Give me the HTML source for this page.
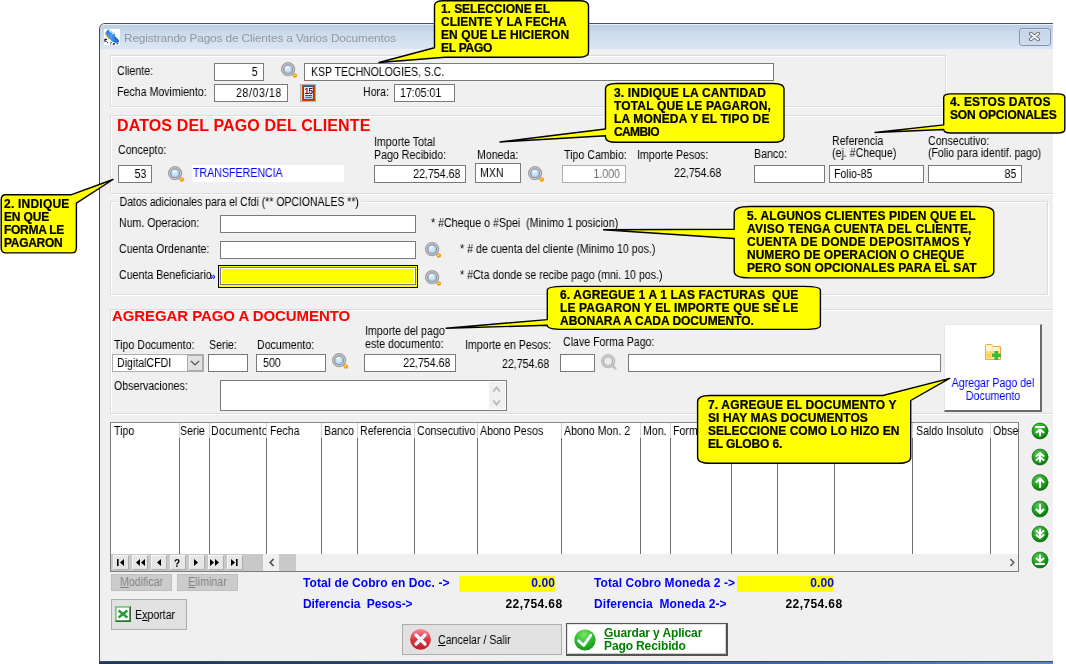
<!DOCTYPE html>
<html>
<head>
<meta charset="utf-8">
<title>Registrando Pagos de Clientes a Varios Documentos</title>
<style>
html,body{margin:0;padding:0;}
body{width:1066px;height:664px;position:relative;overflow:hidden;background:#fff;font-family:"Liberation Sans",sans-serif;font-size:12px;color:#000;}
.a{position:absolute;box-sizing:border-box;white-space:nowrap;}
.t,.in i,.gh,.bb,.ct,.hd{will-change:transform;}
.t{position:absolute;white-space:nowrap;line-height:14px;font-size:12px;transform:scaleX(.885);transform-origin:0 0;}
.tc{transform-origin:50% 0;}
.in i{font-style:normal;display:inline-block;transform:scaleX(.885);transform-origin:0 50%;}
.in.r i{transform-origin:100% 50%;}
.in{position:absolute;box-sizing:border-box;background:#fff;border:1px solid #7a7a7a;font-size:12px;line-height:16px;padding:0 5px;white-space:nowrap;overflow:hidden;}
.r{text-align:right;}
.gb{position:absolute;box-sizing:border-box;border:1px solid #dcdcdc;box-shadow:1px 1px 0 #fff, inset 1px 1px 0 #fff;}
.hd{position:absolute;white-space:nowrap;font-weight:bold;color:#ff0000;}
.bb{position:absolute;white-space:nowrap;font-weight:bold;color:#0000ff;font-size:12px;line-height:14px;letter-spacing:0.07px;}
.ct{position:absolute;white-space:pre;font-weight:bold;font-size:12px;line-height:13px;letter-spacing:0.17px;color:#000;-webkit-text-stroke:0.22px #000;}
.vl{position:absolute;width:1px;background:#6e6e6e;top:438px;height:116px;}
.gh{position:absolute;top:424px;white-space:nowrap;font-size:12px;line-height:14px;transform:scaleX(.885);transform-origin:0 0;}
.nb{position:absolute;top:555px;width:16px;height:15px;box-sizing:border-box;background:#e6e6e6;border:1px solid #f6f6f6;border-right-color:#adadad;border-bottom-color:#adadad;}
</style>
</head>
<body>

<!-- window frame -->
<div class="a" id="win" style="left:99px;top:23px;width:953.5px;height:639px;background:#f0f0f0;border-left:1px solid #484848;border-top:1px solid #505050;border-bottom:1px solid #484848;border-top-left-radius:6px;"></div>
<div class="a" style="left:100px;top:660px;width:952.5px;height:1px;background:#e6eef8;"></div>
<div class="a" id="titlebar" style="left:100px;top:24px;width:952.5px;height:25px;background:linear-gradient(#bccee3 0%,#cddbec 35%,#dae6f3 100%);border-top-left-radius:5px;border-top:1px solid #eaf1fa;"></div>
<div class="a" style="left:100px;top:49px;width:2px;height:611px;background:linear-gradient(90deg,#f4f8fc,#d6e4f3);"></div>
<div class="a" id="botstrip" style="left:99px;top:662px;width:953.5px;height:2px;background:linear-gradient(90deg,#1e3658,#26406a 25%,#2c5596 50%,#3a68b0 75%,#5888cc);"></div>

<!-- title icon -->
<svg class="a" style="left:104px;top:29px" width="16" height="16" viewBox="0 0 16 16">
<defs><linearGradient id="sh" x1="0" y1="0" x2="1" y2="0.3"><stop offset="0" stop-color="#1f74d8"/><stop offset="0.5" stop-color="#4a9ef0"/><stop offset="1" stop-color="#1f70d0"/></linearGradient></defs>
<rect width="16" height="16" fill="#fff"/>
<path d="M1 3.3 L2.4 2.8 L2.4 5.4 L6.2 10 L5 10.6 L1.2 6Z" fill="#f0a818"/>
<path d="M4.6 0 L5.2 1.4 L10.6 4 L11 7 L15 11.4 L14.8 13.4 L12 14 L8 12.5 L5 9 L2.2 5 L2.2 2.4Z" fill="url(#sh)"/>
<path d="M5.4 1.4 L10.4 3.8 L9.6 5 L5 2.6Z" fill="#c4d2e6"/>
<path d="M8.2 3.8 L10.2 4 L10 5 L8.4 4.8Z" fill="#fff"/>
<path d="M10.4 8 Q11.5 10.8 13.8 10.6" fill="none" stroke="#1558b0" stroke-width="1"/>
<path d="M3 10.4 H0.9 V12.2 H2.6" fill="none" stroke="#111" stroke-width="1.1"/>
<rect x="3" y="13.2" width="1" height="1" fill="#111"/><rect x="6.6" y="13" width="1" height="1" fill="#111"/><rect x="6.2" y="14.4" width="1" height="1" fill="#111"/>
<path d="M8.4 15.6 L9.4 14 L11 14.2 L10.8 15.8Z" fill="#111"/><rect x="12.4" y="14.3" width="1.8" height="0.9" fill="#222"/>
</svg>
<div class="t" style="left:124.3px;top:31px;font-size:11.8px;color:#94979d;letter-spacing:-0.12px;transform:none;">Registrando Pagos de Clientes a Varios Documentos</div>

<!-- close button -->
<div class="a" style="left:1019px;top:28px;width:32px;height:18px;border:1px solid #8492b0;border-radius:3px;background:linear-gradient(#c6d5e8,#cedbeb);box-shadow:inset 0 0 0 1px #d4e0ef;"></div>
<svg class="a" style="left:1028px;top:31px" width="13" height="11" viewBox="0 0 13 11"><path d="M2.8 2.6 L10.2 8.4 M10.2 2.6 L2.8 8.4" stroke="#4a505c" stroke-width="3.6" stroke-linecap="round"/><path d="M2.8 2.6 L10.2 8.4 M10.2 2.6 L2.8 8.4" stroke="#f6f6f6" stroke-width="2" stroke-linecap="round"/></svg>

<!-- group 1 -->
<div class="gb" style="left:110px;top:55px;width:836px;height:52px;"></div>
<div class="t" style="left:116.5px;top:64.2px;">Cliente:</div>
<div class="t" style="left:116.5px;top:85px;">Fecha Movimiento:</div>
<div class="in r" style="left:214px;top:63px;width:50px;height:18px;"><i>5</i></div>
<div class="in r" style="left:214px;top:84px;width:74px;height:18px;"><i style="letter-spacing:0.65px">28/03/18</i></div>
<div class="in" style="left:304px;top:63px;width:470px;height:18px;padding-left:6.2px;"><i style="transform:scaleX(.875)">KSP TECHNOLOGIES, S.C.</i></div>
<div class="t" style="left:363px;top:85.2px;">Hora:</div>
<div class="in" style="left:394px;top:84px;width:61px;height:18px;padding-left:5px;"><i>17:05:01</i></div>

<!-- group 2 -->
<div class="gb" style="left:110px;top:115px;width:942.5px;height:79px;border-right:none;"></div>
<div class="hd" style="left:117px;top:117px;font-size:16px;line-height:18px;letter-spacing:0.13px;">DATOS DEL PAGO DEL CLIENTE</div>
<div class="t" style="left:118px;top:143px;">Concepto:</div>
<div class="in r" style="left:118px;top:165px;width:34px;height:18px;"><i>53</i></div>
<div class="a" style="left:192px;top:165px;width:152px;height:17px;background:#fff;"></div>
<div class="t" style="left:193px;top:166px;color:#0000ff;">TRANSFERENCIA</div>
<div class="t" style="left:374px;top:135px;">Importe Total</div>
<div class="t" style="left:374px;top:148px;">Pago Recibido:</div>
<div class="in r" style="left:374px;top:165px;width:92px;height:18px;"><i>22,754.68</i></div>
<div class="t" style="left:477px;top:148px;">Moneda:</div>
<div class="in" style="left:475px;top:163px;width:46px;height:20px;padding-left:4px;line-height:18px;"><i>MXN</i></div>
<div class="t" style="left:564px;top:148px;">Tipo Cambio:</div>
<div class="in r" style="left:562px;top:165px;width:64px;height:18px;border-color:#adadad;color:#6d6d6d;"><i>1.000</i></div>
<div class="t" style="left:637px;top:148px;">Importe Pesos:</div>
<div class="t" style="left:674px;top:166px;">22,754.68</div>
<div class="t" style="left:754px;top:147.2px;">Banco:</div>
<div class="in" style="left:754px;top:165px;width:71px;height:18px;"></div>
<div class="t" style="left:832px;top:134.2px;">Referencia</div>
<div class="t" style="left:832px;top:146px;">(ej. #Cheque)</div>
<div class="in" style="left:829px;top:165px;width:95px;height:18px;padding-left:4px;"><i>Folio-85</i></div>
<div class="t" style="left:928px;top:134.2px;">Consecutivo:</div>
<div class="t" style="left:928px;top:146px;transform:scaleX(.87);">(Folio para identif. pago)</div>
<div class="in r" style="left:928px;top:165px;width:94px;height:18px;"><i>85</i></div>

<!-- group 3 -->
<div class="gb" style="left:110px;top:201px;width:938px;height:94px;"></div>
<div class="t" style="left:116.5px;top:194.5px;background:#f0f0f0;padding:0 3px;transform:scaleX(.873);">Datos adicionales para el Cfdi (** OPCIONALES **)</div>
<div class="t" style="left:119px;top:216px;">Num. Operacion:</div>
<div class="t" style="left:119px;top:242px;">Cuenta Ordenante:</div>
<div class="t" style="left:119px;top:268px;">Cuenta Beneficiario</div>
<div class="t" style="left:210px;top:270.2px;color:#1010e0;font-size:10px;font-weight:bold;transform:none;">&raquo;</div>
<div class="in" style="left:220px;top:215px;width:196px;height:18px;"></div>
<div class="in" style="left:220px;top:241px;width:196px;height:18px;"></div>
<div class="a" style="left:218px;top:265px;width:200px;height:23px;background:#ffff00;border:1px solid #000;"></div>
<div class="a" style="left:220px;top:267px;width:196px;height:18px;background:#ffff00;border:1px solid #7a7a7a;box-shadow:inset 1px 1px 0 #fff,inset -1px -1px 0 #fff;"></div>
<div class="t" style="left:431px;top:216px;">* #Cheque o #Spei&nbsp; (Minimo 1 posicion)</div>
<div class="t" style="left:460px;top:242px;">* # de cuenta del cliente (Minimo 10 pos.)</div>
<div class="t" style="left:460px;top:268px;">* #Cta donde se recibe pago (mni. 10 pos.)</div>

<!-- group 4 -->
<div class="gb" style="left:110px;top:309px;width:942.5px;height:105px;border-right:none;"></div>
<div class="hd" style="left:112px;top:306.7px;font-size:15px;line-height:17px;letter-spacing:-0.08px;">AGREGAR PAGO A DOCUMENTO</div>
<div class="t" style="left:114px;top:338px;">Tipo Documento:</div>
<div class="t" style="left:209px;top:338px;">Serie:</div>
<div class="t" style="left:257px;top:338px;">Documento:</div>
<div class="in" style="left:112px;top:354px;width:92px;height:18px;padding-left:4px;border-color:#adadad;"><i>DigitalCFDI</i></div>
<div class="a" style="left:187px;top:355px;width:16px;height:16px;background:#e1e1e1;border:1px solid #adadad;"></div>
<svg class="a" style="left:190px;top:360px" width="10" height="7" viewBox="0 0 10 7"><path d="M1 1 L5 5 L9 1" fill="none" stroke="#555" stroke-width="1.2"/></svg>
<div class="in" style="left:208px;top:354px;width:40px;height:18px;"></div>
<div class="in" style="left:256px;top:354px;width:70px;height:18px;padding-left:6px;"><i>500</i></div>
<div class="t" style="left:365px;top:324px;">Importe del pago</div>
<div class="t" style="left:365px;top:337px;">este documento:</div>
<div class="in r" style="left:364px;top:354px;width:92px;height:18px;"><i>22,754.68</i></div>
<div class="t" style="left:465px;top:338px;">Importe en Pesos:</div>
<div class="t" style="left:502px;top:357px;">22,754.68</div>
<div class="t" style="left:563px;top:335px;">Clave Forma Pago:</div>
<div class="in" style="left:560px;top:354px;width:34.5px;height:18px;"></div>
<div class="in" style="left:628px;top:354px;width:313px;height:18px;"></div>
<div class="t" style="left:114px;top:379px;">Observaciones:</div>
<div class="in" style="left:220px;top:380px;width:287px;height:31px;"></div>
<div class="a" style="left:489px;top:382px;width:16px;height:27px;background:#f0f0f0;"></div>
<svg class="a" style="left:492px;top:385px" width="11" height="22" viewBox="0 0 11 22"><path d="M1.2 6.6 L4.6 2.3 L8 6.6" fill="none" stroke="#bcbcbc" stroke-width="1.9"/><path d="M1.2 15.3 L4.6 19.7 L8 15.3" fill="none" stroke="#bcbcbc" stroke-width="1.9"/></svg>

<!-- agregar pago button -->
<div class="a" style="left:944px;top:324px;width:98px;height:88px;background:#fff;border:1px solid #e8e8e8;border-right:2px solid #6a6a6a;border-bottom:2px solid #6a6a6a;"></div>
<svg class="a" style="left:985px;top:344px" width="17" height="17" viewBox="0 0 17 17">
<path d="M0.5 2 Q0.5 0.5 2 0.5 H6.5 L8 2.5 H15.5 V15.5 H0.5 Z" fill="#fdf3c4" stroke="#f2a646" stroke-width="1"/>
<path d="M1 8.2 H7.5 L8.5 7 H15 V15 H1Z" fill="#fde88c"/>
<rect x="1.6" y="9.5" width="4.5" height="4.5" fill="#fdd24a"/>
<path d="M0.5 8 H7.5 L8.5 6.8" fill="none" stroke="#f2b060" stroke-width="0.8"/>
<path d="M11.3 6.9 V16 M6.9 11.3 H16" stroke="#3cba3c" stroke-width="3.6"/>
</svg>
<div class="t tc" style="left:938px;top:377.2px;width:110px;text-align:center;color:#0000ff;line-height:13px;white-space:normal;">Agregar Pago del Documento</div>

<!-- grid -->
<div class="a" style="left:110px;top:422px;width:909px;height:150px;background:#fff;border:1px solid #7a7a7a;border-top-color:#8a8a8a;"></div>
<div class="gh" style="left:114px;">Tipo</div>
<div class="gh" style="left:180.3px;">Serie</div>
<div class="gh" style="left:210.5px;width:62.5px;overflow:hidden;letter-spacing:0.35px;">Documento</div>
<div class="gh" style="left:270px;">Fecha</div>
<div class="gh" style="left:324px;">Banco</div>
<div class="gh" style="left:360px;">Referencia</div>
<div class="gh" style="left:417px;width:67px;overflow:hidden;">Consecutivo</div>
<div class="gh" style="left:480px;">Abono Pesos</div>
<div class="gh" style="left:564px;">Abono Mon. 2</div>
<div class="gh" style="left:643px;">Mon.</div>
<div class="gh" style="left:673px;">Form</div>
<div class="gh" style="left:916px;">Saldo Insoluto</div>
<div class="gh" style="left:993px;width:29px;overflow:hidden;">Obse</div>
<div class="a" style="left:179px;top:423px;width:1px;height:15px;background:#d4d4d4;"></div><div class="a" style="left:209px;top:423px;width:1px;height:15px;background:#d4d4d4;"></div><div class="a" style="left:266px;top:423px;width:1px;height:15px;background:#d4d4d4;"></div><div class="a" style="left:321px;top:423px;width:1px;height:15px;background:#d4d4d4;"></div><div class="a" style="left:357px;top:423px;width:1px;height:15px;background:#d4d4d4;"></div><div class="a" style="left:414px;top:423px;width:1px;height:15px;background:#d4d4d4;"></div><div class="a" style="left:477px;top:423px;width:1px;height:15px;background:#d4d4d4;"></div><div class="a" style="left:561px;top:423px;width:1px;height:15px;background:#d4d4d4;"></div><div class="a" style="left:640px;top:423px;width:1px;height:15px;background:#d4d4d4;"></div><div class="a" style="left:670px;top:423px;width:1px;height:15px;background:#d4d4d4;"></div><div class="a" style="left:731px;top:423px;width:1px;height:15px;background:#d4d4d4;"></div><div class="a" style="left:777px;top:423px;width:1px;height:15px;background:#d4d4d4;"></div><div class="a" style="left:834px;top:423px;width:1px;height:15px;background:#d4d4d4;"></div><div class="a" style="left:912px;top:423px;width:1px;height:15px;background:#d4d4d4;"></div><div class="a" style="left:990px;top:423px;width:1px;height:15px;background:#d4d4d4;"></div>
<div class="vl" style="left:179px"></div>
<div class="vl" style="left:209px"></div>
<div class="vl" style="left:266px"></div>
<div class="vl" style="left:321px"></div>
<div class="vl" style="left:357px"></div>
<div class="vl" style="left:414px"></div>
<div class="vl" style="left:477px"></div>
<div class="vl" style="left:561px"></div>
<div class="vl" style="left:640px"></div>
<div class="vl" style="left:670px"></div>
<div class="vl" style="left:731px"></div>
<div class="vl" style="left:777px"></div>
<div class="vl" style="left:834px"></div>
<div class="vl" style="left:912px"></div>
<div class="vl" style="left:990px"></div>
<!-- nav row -->
<div class="a" style="left:111px;top:554px;width:907px;height:17px;background:#f0f0f0;"></div>
<div class="a" style="left:111px;top:554px;width:152px;height:17px;background:#c8c8c8;"></div>
<div class="nb" style="left:113px"></div>
<div class="nb" style="left:132px"></div>
<div class="nb" style="left:151px"></div>
<div class="nb" style="left:170px"></div>
<div class="nb" style="left:189px"></div>
<div class="nb" style="left:208px"></div>
<div class="nb" style="left:227px"></div>
<svg class="a" style="left:112px;top:554.8px;will-change:transform" width="132" height="14" viewBox="0 0 132 14" fill="#000">
<rect x="5" y="4" width="1.6" height="7"/><path d="M12 4 L12 11 L8 7.5Z"/>
<path d="M28 4 L28 11 L24 7.5Z"/><path d="M33 4 L33 11 L29 7.5Z"/>
<path d="M49 4 L49 11 L45 7.5Z"/>
<text x="62" y="11.5" font-family="Liberation Sans" font-weight="bold" font-size="10">?</text>
<path d="M82 4 L82 11 L86 7.5Z"/>
<path d="M98 4 L98 11 L102 7.5Z"/><path d="M103 4 L103 11 L107 7.5Z"/>
<path d="M119 4 L119 11 L123 7.5Z"/><rect x="124" y="4" width="1.6" height="7"/>
</svg>
<svg class="a" style="left:267px;top:557px" width="10" height="11" viewBox="0 0 10 11"><path d="M6.6 2 L3.2 5.5 L6.6 9" fill="none" stroke="#505050" stroke-width="1.7"/></svg>
<div class="a" style="left:279px;top:554px;width:17px;height:17px;background:#c9c9c9;"></div>
<svg class="a" style="left:1007px;top:557px" width="10" height="11" viewBox="0 0 10 11"><path d="M3.4 2 L6.8 5.5 L3.4 9" fill="none" stroke="#606060" stroke-width="1.6"/></svg>

<!-- lower buttons -->
<div class="a" style="left:111px;top:574px;width:61px;height:17px;background:#cccccc;border:1px solid #bfbfbf;"></div>
<div class="t tc" style="left:111px;top:575px;width:61px;text-align:center;color:#838383;"><u>M</u>odificar</div>
<div class="a" style="left:177px;top:574px;width:61px;height:17px;background:#cccccc;border:1px solid #bfbfbf;"></div>
<div class="t tc" style="left:177px;top:575px;width:61px;text-align:center;color:#838383;"><u>E</u>liminar</div>
<div class="a" style="left:111px;top:599px;width:76px;height:31px;background:#e1e1e1;border:1px solid #adadad;"></div>
<svg class="a" style="left:115px;top:606px" width="16" height="16" viewBox="0 0 16 16">
<rect width="16" height="16" fill="#86c486"/>
<path d="M16 0 V16 H0 L1.8 14.2 H14.2 V1.8Z" fill="#2c6c2c"/>
<rect x="1.8" y="1.8" width="12.4" height="12.4" fill="#fff"/>
<path d="M3.6 4.6 L12.4 11.4 M12.4 4.6 L3.6 11.4" stroke="#2a9a3a" stroke-width="2.5"/>
</svg>
<div class="t" style="left:135px;top:608px;">E<u>x</u>portar</div>

<!-- totals -->
<div class="bb" style="left:303px;top:576px;">Total de Cobro en Doc. -&gt;</div>
<div class="a" style="left:459px;top:576px;width:96px;height:16px;background:#ffff00;"></div>
<div class="bb" style="left:459px;top:576px;width:96px;text-align:right;">0.00</div>
<div class="bb" style="left:303px;top:597px;letter-spacing:-0.08px;">Diferencia&nbsp; Pesos-&gt;</div>
<div class="bb" style="left:459px;top:597px;width:103.5px;text-align:right;color:#000;letter-spacing:0.4px;">22,754.68</div>
<div class="bb" style="left:594px;top:576px;">Total Cobro Moneda 2 -&gt;</div>
<div class="a" style="left:737px;top:576px;width:97px;height:16px;background:#ffff00;"></div>
<div class="bb" style="left:737px;top:576px;width:97px;text-align:right;">0.00</div>
<div class="bb" style="left:594px;top:597px;">Diferencia&nbsp; Moneda 2-&gt;</div>
<div class="bb" style="left:739px;top:597px;width:103.5px;text-align:right;color:#000;letter-spacing:0.4px;">22,754.68</div>

<!-- cancel / save buttons -->
<div class="a" style="left:402px;top:624px;width:160px;height:31px;background:#e1e1e1;border:1px solid #adadad;"></div>
<svg class="a" style="left:408.5px;top:628px" width="23" height="23" viewBox="0 0 23 23">
<defs><linearGradient id="rg" x1="0" y1="0" x2="0" y2="1"><stop offset="0" stop-color="#f48a92"/><stop offset="0.5" stop-color="#dc3840"/><stop offset="1" stop-color="#c01c26"/></linearGradient></defs>
<circle cx="11.5" cy="11.4" r="10.4" fill="url(#rg)"/>
<path d="M7 7 L16 16 M16 7 L7 16" stroke="#f2f8ff" stroke-width="3.3" stroke-linecap="round"/>
</svg>
<div class="t" style="left:438px;top:633px;"><u>C</u>ancelar / Salir</div>

<div class="a" style="left:566px;top:623px;width:162px;height:33px;background:#fff;border:1px solid #555;border-right:2px solid #555;border-bottom:2px solid #555;box-shadow:inset 1px 1px 0 #e4e4e4,inset -1px -1px 0 #d0d0d0;"></div>
<svg class="a" style="left:573px;top:627.5px" width="24" height="24" viewBox="0 0 24 24">
<defs><radialGradient id="gg" cx="0.45" cy="0.25" r="0.75"><stop offset="0" stop-color="#7ae868"/><stop offset="0.6" stop-color="#2cb82c"/><stop offset="1" stop-color="#189618"/></radialGradient></defs>
<circle cx="12" cy="12" r="10.6" fill="url(#gg)"/>
<path d="M5.6 12.8 L10.8 17.4 L17.8 7.2" fill="none" stroke="#f4f8ff" stroke-width="2.9" stroke-linecap="round" stroke-linejoin="round"/>
</svg>
<div class="bb" style="left:604px;top:626px;color:#008000;line-height:13px;letter-spacing:-0.12px;top:627px;"><u>G</u>uardar y Aplicar<br>Pago Recibido</div>

<!-- green side arrows -->
<svg class="a" style="left:1030px;top:422px" width="20" height="150" viewBox="0 0 20 150">
<defs><radialGradient id="ga" cx="0.4" cy="0.3" r="0.8"><stop offset="0" stop-color="#58c858"/><stop offset="0.65" stop-color="#169616"/><stop offset="1" stop-color="#0a620a"/></radialGradient></defs>
<g stroke="#fff" stroke-width="2.1" fill="none" stroke-linecap="round" stroke-linejoin="round">
<circle cx="10" cy="9" r="8" fill="url(#ga)" stroke="#0a5a0a" stroke-width="0.6"/>
<path d="M6 5 H14 M10 13.5 V8 M6.5 10.5 L10 7.5 L13.5 10.5"/>
<circle cx="10" cy="35" r="8" fill="url(#ga)" stroke="#0a5a0a" stroke-width="0.6"/>
<path d="M6.5 34 L10 31 L13.5 34 M6.5 38 L10 35 L13.5 38 M10 39.5 V32"/>
<circle cx="10" cy="60.5" r="8" fill="url(#ga)" stroke="#0a5a0a" stroke-width="0.6"/>
<path d="M10 65 V57 M6.5 60 L10 56.5 L13.5 60"/>
<circle cx="10" cy="87" r="8" fill="url(#ga)" stroke="#0a5a0a" stroke-width="0.6"/>
<path d="M10 82.5 V90.5 M6.5 87.5 L10 91 L13.5 87.5"/>
<circle cx="10" cy="112" r="8" fill="url(#ga)" stroke="#0a5a0a" stroke-width="0.6"/>
<path d="M6.5 109 L10 112 L13.5 109 M6.5 113 L10 116 L13.5 113 M10 107.5 V115"/>
<circle cx="10" cy="138" r="8" fill="url(#ga)" stroke="#0a5a0a" stroke-width="0.6"/>
<path d="M6 142 H14 M10 133.5 V139 M6.5 136.5 L10 139.5 L13.5 136.5"/>
</g>
</svg>

<!-- magnifier icons -->
<svg width="0" height="0" style="position:absolute">
<defs>
<radialGradient id="mg" cx="0.4" cy="0.35" r="0.7"><stop offset="0" stop-color="#e4f4fd"/><stop offset="1" stop-color="#a4d4f2"/></radialGradient>
<g id="mag">
<path d="M11 11.2 L13.4 13.4" stroke="#a4a4a8" stroke-width="2.4"/>
<circle cx="7.1" cy="7.2" r="6.5" fill="#d2d2d8" stroke="#a0a0a8" stroke-width="1.3"/>
<circle cx="7.1" cy="7.2" r="4.4" fill="url(#mg)" stroke="#92929c" stroke-width="1.3"/>
<path d="M4.6 6.2 Q5.4 4.4 7.4 4.2" fill="none" stroke="#ffffff" stroke-width="0.9" opacity="0.8"/>
<circle cx="13.8" cy="13.5" r="2.3" fill="#f59c1a"/>
<circle cx="13.4" cy="13" r="1" fill="#ffd84a"/>
</g>
<g id="magg">
<path d="M11 11.2 L14.4 14.4" stroke="#c0c0c0" stroke-width="2.6" stroke-linecap="round"/>
<circle cx="7.1" cy="7.2" r="6.5" fill="#dcdcdc" stroke="#b8b8b8" stroke-width="1.3"/>
<circle cx="7.1" cy="7.2" r="4.4" fill="#ededed" stroke="#b0b0b0" stroke-width="1.3"/>
</g>
</defs>
</svg>
<svg class="a" style="left:280.8px;top:61.9px" width="18" height="18"><use href="#mag"/></svg>
<svg class="a" style="left:167.5px;top:165.5px" width="18" height="18"><use href="#mag"/></svg>
<svg class="a" style="left:528.1px;top:165.9px" width="18" height="18"><use href="#mag"/></svg>
<svg class="a" style="left:424.7px;top:241.9px" width="18" height="18"><use href="#mag"/></svg>
<svg class="a" style="left:424.7px;top:269.8px" width="18" height="18"><use href="#mag"/></svg>
<svg class="a" style="left:331.9px;top:353.4px" width="18" height="18"><use href="#mag"/></svg>
<svg class="a" style="left:601.3px;top:353.8px" width="18" height="18"><use href="#magg"/></svg>

<!-- calendar icon -->
<svg class="a" style="left:300px;top:84px;will-change:transform" width="16" height="18" viewBox="0 0 16 18">
<defs><linearGradient id="cg" x1="0" y1="0" x2="1" y2="1"><stop offset="0" stop-color="#ffffff"/><stop offset="1" stop-color="#d4ecfc"/></linearGradient></defs>
<rect x="0.5" y="0.5" width="15" height="17" fill="#e6e6e6" stroke="#b2b2b2"/>
<rect x="1.9" y="1" width="13.2" height="16" fill="#c84a08"/>
<rect x="3.1" y="2.1" width="10.8" height="13.7" fill="#1a5a90"/>
<rect x="4.1" y="3.1" width="8.8" height="11.7" fill="url(#cg)"/>
<text x="8.5" y="10.2" text-anchor="middle" font-family="Liberation Sans" font-weight="bold" font-size="8.2" fill="#7a0000" letter-spacing="-0.5">15</text>
<rect x="5.2" y="11" width="6.8" height="1" fill="#1a5a90"/>
<rect x="5.2" y="12.8" width="6.8" height="1" fill="#1a5a90"/>
</svg>

<!-- callouts -->
<svg class="a" style="left:0;top:0" width="1066" height="664" viewBox="0 0 1066 664">
<g fill="#ffff00" stroke="#000" stroke-width="1.4" stroke-linejoin="round">
<!-- 1 -->
<path d="M443.7 0.7 H579.3 Q588.5 0.7 588.5 5.8 V52.1 Q588.5 57.2 579.3 57.2 H445 L379 62.5 L434.5 47.7 V5.8 Q434.5 0.7 443.7 0.7Z"/>
<!-- 2 -->
<path d="M5.7 194.8 H70.9 L113 179.5 L76.4 203.2 V247.70000000000002 Q76.4 252.9 71.9 252.9 H5.7 Q1.2 252.9 1.2 247.70000000000002 V200.0 Q1.2 194.8 5.7 194.8Z"/>
<!-- 3 -->
<path d="M616.2 83.5 H773.3 Q784 83.5 784 88.8 V136.89999999999998 Q784 142.2 773.3 142.2 H616.2 Q605.5 142.2 605.5 136.89999999999998 V135.7 L500 142 L605.5 129 V88.8 Q605.5 83.5 616.2 83.5Z"/>
<!-- 4 -->
<path d="M951.0 93.9 H1057.5 Q1064.8 93.9 1064.8 97.4 V129.5 Q1064.8 133 1057.5 133 H951.0 Q943.7 133 943.7 129.5 V129.5 L875 132.5 L943.7 124.9 V97.4 Q943.7 93.9 951.0 93.9Z"/>
<!-- 5 -->
<path d="M749.8000000000001 206.5 H978.1999999999999 Q993.8 206.5 993.8 212.9 V271.5 Q993.8 277.9 978.1999999999999 277.9 H749.8000000000001 Q734.2 277.9 734.2 271.5 V238.5 L603.5 229.8 L734.2 229.3 V212.9 Q734.2 206.5 749.8000000000001 206.5Z"/>
<!-- 6 -->
<path d="M563.6999999999999 286.4 H804.0 Q820.4 286.4 820.4 290.29999999999995 V325.5 Q820.4 329.4 804.0 329.4 H563.6999999999999 Q547.3 329.4 547.3 325.5 V325.3 L446 328.3 L547.3 319.6 V290.29999999999995 Q547.3 286.4 563.6999999999999 286.4Z"/>
<!-- 7 -->
<path d="M710.4 395.5 H883 L949.6 378.4 L910.7 400.5 V457.2 Q910.7 463.3 897.9000000000001 463.3 H710.4 Q697.6 463.3 697.6 457.2 V401.6 Q697.6 395.5 710.4 395.5Z"/>
</g>
</svg>
<div class="ct" style="left:441px;top:3px;"><span style="letter-spacing:-0.06px">1. SELECCIONE EL</span>
<span style="letter-spacing:-0.01px">CLIENTE Y LA FECHA</span>
<span style="letter-spacing:0.09px">EN QUE LE HICIERON</span>
<span style="letter-spacing:-0.27px">EL PAGO</span></div>
<div class="ct" style="left:4px;top:198px;"><span style="letter-spacing:0.22px">2. INDIQUE</span>
<span style="letter-spacing:-0.14px">EN QUE</span>
<span style="letter-spacing:-0.29px">FORMA LE</span>
<span style="letter-spacing:-0.31px">PAGARON</span></div>
<div class="ct" style="left:614px;top:87px;"><span style="letter-spacing:0.17px">3. INDIQUE LA CANTIDAD</span>
<span style="letter-spacing:0.15px">TOTAL QUE LE PAGARON,</span>
<span style="letter-spacing:0.14px">LA MONEDA Y EL TIPO DE</span>
<span style="letter-spacing:-0.63px">CAMBIO</span></div>
<div class="ct" style="left:950px;top:96px;"><span style="letter-spacing:0.19px">4. ESTOS DATOS</span>
<span style="letter-spacing:-0.15px">SON OPCIONALES</span></div>
<div class="ct" style="left:746.5px;top:210px;"><span style="letter-spacing:0.16px">5. ALGUNOS CLIENTES PIDEN QUE EL</span>
<span style="letter-spacing:0.2px">AVISO TENGA CUENTA DEL CLIENTE,</span>
<span style="letter-spacing:0.23px">CUENTA DE DONDE DEPOSITAMOS Y</span>
<span style="letter-spacing:0.02px">NUMERO DE OPERACION O CHEQUE</span>
<span style="letter-spacing:0.09px">PERO SON OPCIONALES PARA EL SAT</span></div>
<div class="ct" style="left:560px;top:289px;"><span style="letter-spacing:0.15px">6. AGREGUE 1 A 1 LAS FACTURAS  QUE</span>
<span style="letter-spacing:0.14px">LE PAGARON Y EL IMPORTE QUE SE LE</span>
<span style="letter-spacing:-0.03px">ABONARA A CADA DOCUMENTO.</span></div>
<div class="ct" style="left:708px;top:399px;"><span style="letter-spacing:0.15px">7. AGREGUE EL DOCUMENTO Y</span>
<span style="letter-spacing:0.07px">SI HAY MAS DOCUMENTOS</span>
<span style="letter-spacing:0.03px">SELECCIONE COMO LO HIZO EN</span>
<span style="letter-spacing:-0.15px">EL GLOBO 6.</span></div>

</body>
</html>
